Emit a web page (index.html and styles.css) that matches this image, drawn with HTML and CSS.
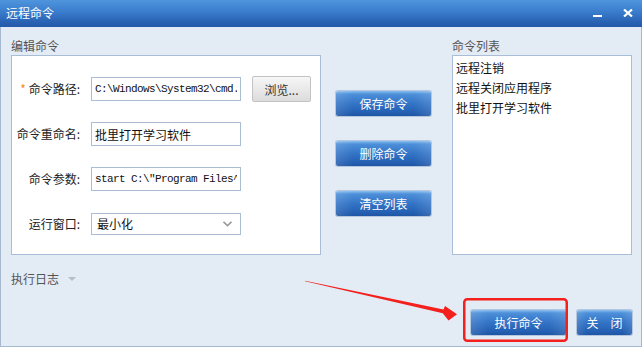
FILE: index.html
```html
<!DOCTYPE html>
<html lang="zh-CN">
<head>
  <meta charset="UTF-8">
  <title>远程命令</title>
  <link rel="stylesheet" href="styles.css">
</head>
<body>
  <div class="window">
    <div class="titlebar">
      <span class="title">远程命令</span>
      <div class="win-ctrls">
        <span class="min"></span>
        <svg class="close" width="10" height="8" viewBox="0 0 10 8">
          <path d="M1 0.5 L9 7.5 M9 0.5 L1 7.5" stroke="#fff" stroke-width="2.2"/>
        </svg>
      </div>
    </div>

    <div class="content">
      <div class="top">
        <section class="edit">
          <div class="caption">编辑命令</div>
          <div class="edit-box">
            <label class="lbl"><span class="req">*</span> 命令路径:</label>
            <input class="field mono" type="text" value="C:\Windows\System32\cmd.exe">
            <button class="browse">浏览...</button>

            <label class="lbl">命令重命名:</label>
            <input class="field" type="text" value="批里打开学习软件">
            <span></span>

            <label class="lbl">命令参数:</label>
            <input class="field mono" type="text" value='start C:\"Program Files^"'>
            <span></span>

            <label class="lbl">运行窗口:</label>
            <div class="select">
              <span>最小化</span>
              <svg width="9" height="6" viewBox="0 0 9 6">
                <path d="M0.5 0.8 L4.5 4.6 L8.5 0.8" fill="none" stroke="#9a9a9a" stroke-width="1.6"/>
              </svg>
            </div>
            <span></span>
          </div>
        </section>

        <div class="actions">
          <button class="btn">保存命令</button>
          <button class="btn">删除命令</button>
          <button class="btn">清空列表</button>
        </div>

        <section class="list">
          <div class="caption">命令列表</div>
          <ul class="list-box">
            <li>远程注销</li>
            <li>远程关闭应用程序</li>
            <li>批里打开学习软件</li>
          </ul>
        </section>
      </div>

      <div class="log">执行日志 <span class="tri"></span></div>

      <div class="footer">
        <button class="btn run">执行命令</button>
        <button class="btn close-btn">关　闭</button>
      </div>
    </div>

    <!-- annotation drawn over the dialog -->
    <svg class="annot" width="642" height="347" viewBox="0 0 642 347">
      <polygon points="305,280.7 443.5,309.6 445,306 457,314.3 448.5,320.5 442.8,313.2 305,281.3" fill="#f3201c"/>
      <rect x="464.25" y="299.25" width="102.5" height="41.5" rx="3" fill="none" stroke="#f3201c" stroke-width="2.5"/>
    </svg>
  </div>
</body>
</html>
```

FILE: styles.css
```css
body {
  margin: 0;
  font-family: "Noto Sans CJK SC", "Liberation Sans", sans-serif;
  font-size: 12px;
  color: #222;
}

.window {
  position: relative;
  width: 642px;
  height: 347px;
  display: flex;
  flex-direction: column;
}

.titlebar {
  height: 27px;
  display: flex;
  align-items: center;
  justify-content: space-between;
  padding: 0 9px 0 6px;
  background: linear-gradient(#4f95dd, #3a7ccc 45%, #2a63b4 80%, #2559a9);
  color: #fff;
}

.title {
  font-size: 12px;
  line-height: 14px;
  margin-top: -1px;
}

.win-ctrls {
  display: flex;
  align-items: center;
  gap: 21px;
}

.min {
  width: 9px;
  height: 2px;
  margin-top: 5px;
  background: #fff;
}

.close {
  display: block;
  margin-top: -1px;
}

.content {
  flex: 1;
  background: #e3ebf5;
  border: 1px solid #a7b9d1;
  border-top: none;
  padding: 10px 9px 0 10px;
}

.top {
  display: flex;
}

.caption {
  line-height: 18px;
  color: #555;
}

.edit {
  width: 310px;
}

.edit-box {
  height: 200px;
  box-sizing: border-box;
  border: 1px solid #a9bed6;
  background: #fff;
  padding-top: 21px;
  display: grid;
  grid-template-columns: 68px 150px 59px;
  grid-auto-rows: 24px;
  column-gap: 11px;
  row-gap: 21px;
}

.lbl {
  line-height: 24px;
  text-align: right;
  color: #222;
  white-space: nowrap;
}

.req {
  color: #f08a22;
}

.field {
  width: 150px;
  height: 24px;
  box-sizing: border-box;
  margin: 0;
  border: 1px solid #abbdd3;
  padding: 0 3px;
  font-family: "Noto Sans CJK SC", sans-serif;
  font-size: 12px;
  color: #111;
  background: #fff;
  outline: none;
}

.field.mono {
  font-family: "Liberation Mono", monospace;
  font-size: 11px;
  letter-spacing: -0.6px;
}

.browse {
  height: 26px;
  width: 59px;
  align-self: center;
  margin: 0;
  border: 1px solid #c3c3c3;
  border-radius: 2px;
  background: linear-gradient(#f6f6f6, #e9e9e9 50%, #dcdcdc);
  font-family: "Noto Sans CJK SC", sans-serif;
  font-size: 12px;
  color: #333;
  padding: 0;
}

.select {
  height: 22px;
  align-self: center;
  box-sizing: border-box;
  border: 1px solid #abbdd3;
  display: flex;
  align-items: center;
  justify-content: space-between;
  padding: 0 8px 0 5px;
  line-height: 20px;
  color: #111;
}

.actions {
  width: 95px;
  margin-left: 15px;
  padding-top: 54px;
  display: flex;
  flex-direction: column;
  gap: 25px;
}

.btn {
  height: 25px;
  margin: 0;
  padding: 0;
  border: none;
  border-radius: 2px;
  background:
    linear-gradient(90deg, rgba(255,255,255,0.12), rgba(255,255,255,0) 18%, rgba(255,255,255,0) 82%, rgba(255,255,255,0.12)),
    linear-gradient(#8cc0f0, #4d8fd9 12%, #3374c6 50%, #2460b3 85%, #1f56a3);
  box-shadow: 0 0 0 1px rgba(40, 90, 160, 0.25);
  color: #fff;
  font-family: "Noto Sans CJK SC", sans-serif;
  font-size: 12px;
}

.list {
  width: 180px;
  margin-left: 21px;
}

.list-box {
  height: 200px;
  box-sizing: border-box;
  margin: 0;
  padding: 2px 3px;
  list-style: none;
  border: 1px solid #a9bed6;
  background: #fff;
}

.list-box li {
  line-height: 20px;
  color: #111;
}

.log {
  margin-top: 15px;
  line-height: 18px;
  color: #555;
  display: flex;
  align-items: center;
}

.tri {
  margin-left: 9px;
  width: 0;
  height: 0;
  border-left: 4px solid transparent;
  border-right: 4px solid transparent;
  border-top: 4px solid #b4bfcb;
}

.footer {
  margin-top: 22px;
  display: flex;
  justify-content: flex-end;
  gap: 11px;
}

.run {
  width: 95px;
}

.close-btn {
  width: 55px;
}

.annot {
  position: absolute;
  top: 0;
  left: 0;
  pointer-events: none;
}
```
